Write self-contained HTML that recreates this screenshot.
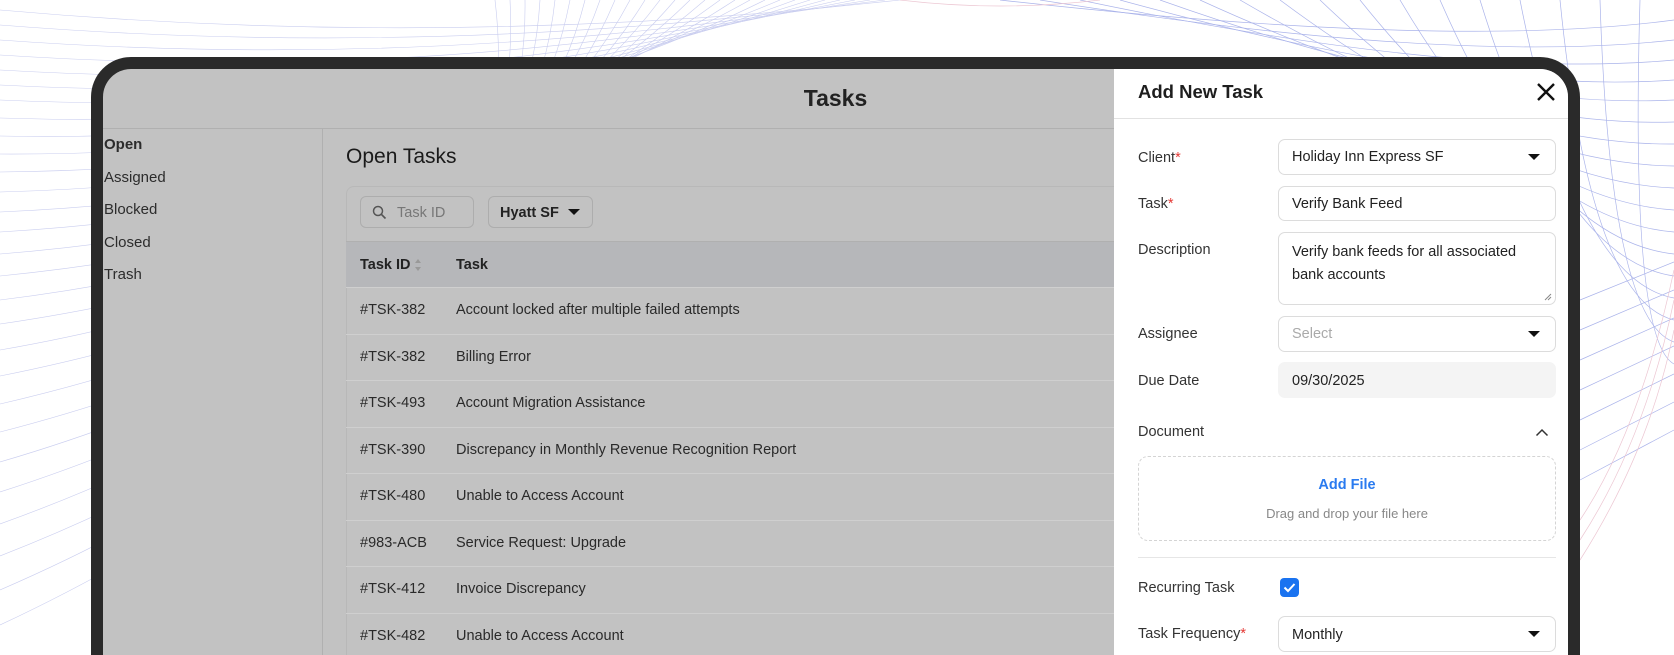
<!DOCTYPE html>
<html><head><meta charset="utf-8"><style>
*{box-sizing:border-box;margin:0;padding:0}
html,body{width:1674px;height:655px;overflow:hidden}
body{background:#fff;position:relative;font-family:"Liberation Sans",Arial,sans-serif;color:#222}
.a{position:absolute}
#frame{left:91px;top:57px;width:1489px;height:598px;background:#2a2a2a;border-radius:40px 40px 0 0}
#screen{left:103px;top:69px;width:1465px;height:586px;background:#c2c2c2;border-radius:28px 28px 0 0;overflow:hidden}
.side{font-size:15px;color:#2c2c2c}
.row{left:243px;width:780px;height:46.5px;border-top:1px solid #cfcfcf;font-size:14.5px;color:#2a2a2a}
.row span{position:absolute;top:14px}
.lbl{left:24px;font-size:14.5px;color:#333}
.inp{left:164px;width:278px;border:1px solid #dcdcdc;border-radius:7px;background:#fff;font-size:14.5px;color:#222;padding-left:13px}
.req{color:#e53935}
.tri{position:absolute;right:15px;top:50%;margin-top:-3px;width:0;height:0;border-left:6px solid transparent;border-right:6px solid transparent;border-top:6px solid #111}
</style></head><body>
<svg class="a" style="left:0;top:0" width="1674" height="655">
<g fill="none" stroke="#c9cdef" stroke-width="0.6">
<path d="M0 10 Q450 50 900 0"/><path d="M0 25 Q440 60 885 0"/><path d="M0 40 Q440 72 870 0"/><path d="M0 55 Q440 84 855 0"/><path d="M0 70 Q440 96 840 0"/><path d="M0 85 Q440 108 825 0"/><path d="M0 100 Q440 120 810 0"/><path d="M0 118 Q440 132 795 0"/><path d="M0 136 Q440 144 780 0"/><path d="M0 154 Q450 156 765 0"/><path d="M0 172 Q450 168 750 0"/><path d="M0 192 Q460 180 735 0"/><path d="M0 212 Q460 192 720 0"/><path d="M0 232 Q470 204 705 0"/><path d="M0 254 Q470 216 690 0"/><path d="M0 276 Q480 228 675 0"/><path d="M0 300 Q480 240 660 0"/><path d="M0 324 Q490 252 645 0"/><path d="M0 350 Q490 264 630 0"/><path d="M0 376 Q500 276 615 0"/><path d="M0 404 Q500 288 600 0"/><path d="M0 432 Q510 300 585 0"/><path d="M0 462 Q510 312 570 0"/><path d="M0 492 Q520 324 555 0"/><path d="M0 524 Q520 336 540 0"/><path d="M0 556 Q530 348 525 0"/><path d="M0 590 Q530 360 510 0"/><path d="M0 625 Q540 372 495 0"/>
</g>
<g fill="none" stroke="#aab3ea" stroke-width="0.7">
<path d="M1000 0 Q1450 50 1674 20"/><path d="M1040 0 Q1450 65 1674 40"/><path d="M1080 0 Q1460 80 1674 60"/><path d="M1120 0 Q1465 95 1674 80"/><path d="M1160 0 Q1470 110 1674 100"/><path d="M1200 0 Q1480 128 1674 122"/><path d="M1240 0 Q1490 146 1674 144"/><path d="M1280 0 Q1500 164 1674 166"/><path d="M1320 0 Q1510 182 1674 188"/><path d="M1360 0 Q1520 200 1674 210"/><path d="M1400 0 Q1530 220 1674 232"/><path d="M1440 0 Q1545 240 1674 254"/><path d="M1480 0 Q1560 260 1674 276"/><path d="M1520 0 Q1575 280 1674 298"/><path d="M1560 0 Q1590 300 1674 320"/><path d="M1600 0 Q1610 320 1674 342"/><path d="M1640 0 Q1630 340 1674 364"/>
<path d="M1580 300 L1674 262"/><path d="M1580 330 L1674 290"/><path d="M1580 360 L1674 318"/><path d="M1580 390 L1674 346"/><path d="M1580 420 L1674 374"/><path d="M1580 450 L1674 402"/><path d="M1580 480 L1674 430"/>
</g>
<g fill="none" stroke="#ecc6d2" stroke-width="0.7">
<path d="M1580 560 Q1650 450 1674 330"/><path d="M1580 540 Q1645 440 1674 300"/><path d="M1580 520 Q1640 430 1674 270"/><path d="M900 0 Q1000 12 1100 0"/>
</g>
</svg>
<div id="frame" class="a"></div>
<div id="screen" class="a">
  <div class="a" style="left:0;top:16px;width:1465px;text-align:center;font-size:23px;font-weight:bold;color:#222">Tasks</div>
  <div class="a" style="left:0;top:59px;width:1011px;height:1px;background:#b0b0b0"></div>
  <div class="a side" style="left:1px;top:67px;font-weight:bold">Open</div>
  <div class="a side" style="left:1px;top:100px">Assigned</div>
  <div class="a side" style="left:1px;top:132px">Blocked</div>
  <div class="a side" style="left:1px;top:165px">Closed</div>
  <div class="a side" style="left:1px;top:197px">Trash</div>
  <div class="a" style="left:219px;top:60px;width:1px;height:700px;background:#b0b0b0"></div>
  <div class="a" style="left:243px;top:76px;font-size:21px;color:#1a1a1a">Open Tasks</div>
  <div class="a" style="left:243px;top:117px;width:800px;height:600px;border:1px solid #b8b8b8;border-radius:8px"></div>
  <div class="a" style="left:257px;top:127px;width:114px;height:32px;border:1px solid #adadad;border-radius:6px;font-size:14.5px;color:#777;padding:8px 0 0 36px">Task ID
    <svg class="a" style="left:11px;top:8px" width="15" height="15" viewBox="0 0 15 15"><circle cx="6" cy="6" r="4.5" fill="none" stroke="#555" stroke-width="1.5"/><path d="M9.5 9.5L13.5 13.5" stroke="#555" stroke-width="1.6"/></svg></div>
  <div class="a" style="left:385px;top:127px;width:105px;height:32px;border:1px solid #adadad;border-radius:6px;font-size:14.5px;font-weight:bold;color:#222;padding:8px 0 0 11px">Hyatt SF<span class="tri" style="right:12px"></span></div>
  <div class="a" style="left:243px;top:172px;width:800px;height:46px;background:#b6b7ba;border-top:1px solid #b0b0b0;font-size:14.5px;font-weight:bold;color:#222">
    <span class="a" style="left:14px;top:15px">Task ID</span>
    <svg class="a" style="left:68px;top:16px" width="8" height="14"><path d="M1 5L4 1L7 5Z M1 9L4 13L7 9Z" fill="#999"/></svg>
    <span class="a" style="left:110px;top:15px">Task</span></div>
  <div class="a row" style="top:218px"><span style="left:14px">#TSK-382</span><span style="left:110px">Account locked after multiple failed attempts</span></div>
  <div class="a row" style="top:264.5px"><span style="left:14px">#TSK-382</span><span style="left:110px">Billing Error</span></div>
  <div class="a row" style="top:311px"><span style="left:14px">#TSK-493</span><span style="left:110px">Account Migration Assistance</span></div>
  <div class="a row" style="top:357.5px"><span style="left:14px">#TSK-390</span><span style="left:110px">Discrepancy in Monthly Revenue Recognition Report</span></div>
  <div class="a row" style="top:404px"><span style="left:14px">#TSK-480</span><span style="left:110px">Unable to Access Account</span></div>
  <div class="a row" style="top:450.5px"><span style="left:14px">#983-ACB</span><span style="left:110px">Service Request: Upgrade</span></div>
  <div class="a row" style="top:497px"><span style="left:14px">#TSK-412</span><span style="left:110px">Invoice Discrepancy</span></div>
  <div class="a row" style="top:543.5px"><span style="left:14px">#TSK-482</span><span style="left:110px">Unable to Access Account</span></div>

  <div class="a" style="left:1011px;top:0;width:454px;height:700px;background:#fff">
    <div class="a" style="left:24px;top:12px;font-size:18.5px;font-weight:bold;color:#1e1e1e">Add New Task</div>
    <svg class="a" style="left:422px;top:13px" width="20" height="20" viewBox="0 0 20 20"><path d="M2 2L18 18M18 2L2 18" stroke="#111" stroke-width="2.4"/></svg>
    <div class="a" style="left:0;top:49px;width:454px;height:1px;background:#e2e2e2"></div>
    <div class="a lbl" style="top:81px">Client<span class="req">*</span></div>
    <div class="a inp" style="top:70px;height:36px;padding-top:9px">Holiday Inn Express SF<span class="tri"></span></div>
    <div class="a lbl" style="top:127px">Task<span class="req">*</span></div>
    <div class="a inp" style="top:117px;height:35px;padding-top:9px">Verify Bank Feed</div>
    <div class="a lbl" style="top:173px">Description</div>
    <div class="a inp" style="top:163px;height:73px;padding-top:8px;line-height:23px;padding-right:20px">Verify bank feeds for all associated bank accounts
      <svg class="a" style="right:3px;bottom:3px" width="8" height="8"><path d="M7 1L1 7M7 4L4 7" stroke="#888" stroke-width="1"/></svg></div>
    <div class="a lbl" style="top:257px">Assignee</div>
    <div class="a inp" style="top:247px;height:36px;padding-top:9px;color:#aaa">Select<span class="tri"></span></div>
    <div class="a lbl" style="top:304px">Due Date</div>
    <div class="a inp" style="top:293px;height:36px;padding-top:10px;background:#f4f4f4;border-color:#f4f4f4">09/30/2025</div>
    <div class="a lbl" style="top:355px">Document</div>
    <svg class="a" style="left:421px;top:359px" width="14" height="9"><path d="M1.5 7.5L7 2L12.5 7.5" fill="none" stroke="#333" stroke-width="1.5"/></svg>
    <div class="a" style="left:24px;top:387px;width:418px;height:85px;border:1.5px dashed #d4d4d4;border-radius:10px;text-align:center">
      <div style="margin-top:20px;font-size:14.5px;font-weight:bold;color:#2a7bf0">Add File</div>
      <div style="margin-top:13px;font-size:13px;color:#888">Drag and drop your file here</div>
    </div>
    <div class="a" style="left:24px;top:488px;width:418px;height:1px;background:#e6e6e6"></div>
    <div class="a lbl" style="top:511px">Recurring Task</div>
    <div class="a" style="left:166px;top:509px;width:19px;height:19px;background:#1a73f0;border-radius:4px">
      <svg class="a" style="left:3px;top:4px" width="13" height="11"><path d="M1.5 5.5L5 9L11.5 2" fill="none" stroke="#fff" stroke-width="2"/></svg></div>
    <div class="a lbl" style="top:557px">Task Frequency<span class="req">*</span></div>
    <div class="a inp" style="top:547px;height:36px;padding-top:10px">Monthly<span class="tri"></span></div>
  </div>
</div>
</body></html>
